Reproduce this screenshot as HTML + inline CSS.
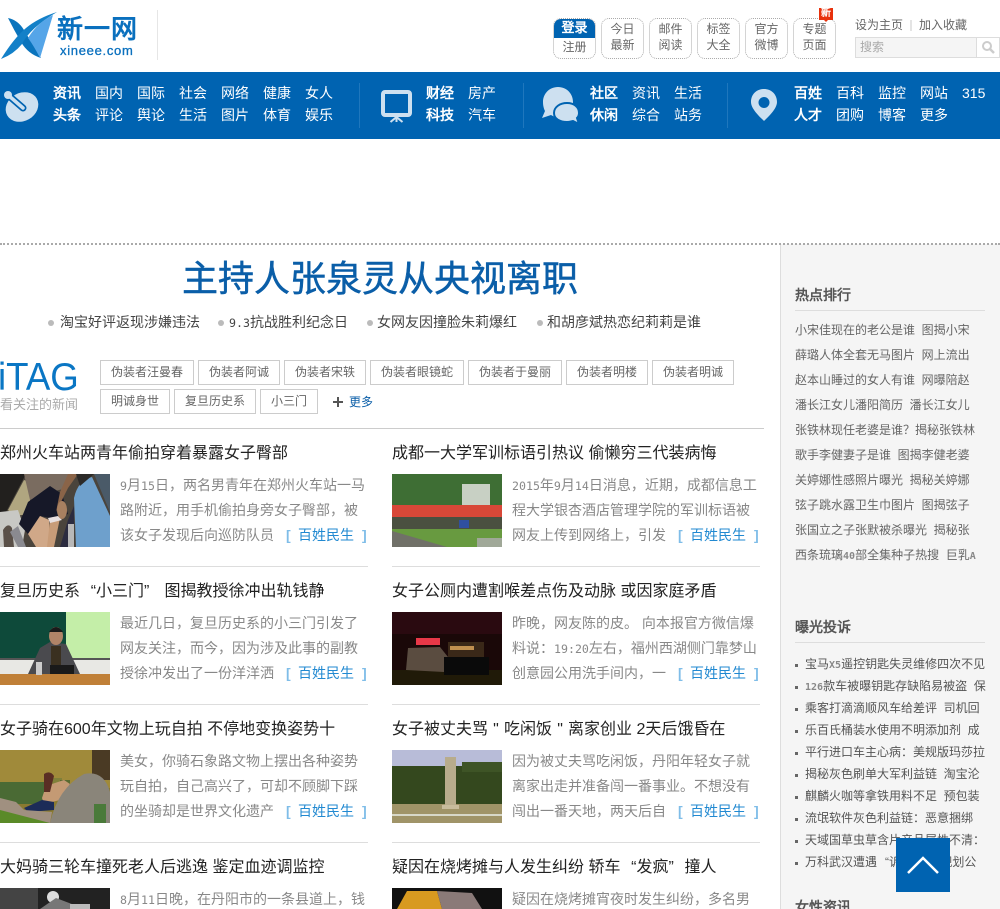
<!DOCTYPE html>
<html lang="zh">
<head>
<meta charset="utf-8">
<title>新一网</title>
<style>
html,body{margin:0;padding:0;background:#fff}
#p{position:relative;width:1000px;height:909px;overflow:hidden;font-family:"WenQuanYi Zen Hei","Liberation Sans",sans-serif;font-size:14px;color:#666}
#p div,#p span,#p svg{position:absolute;white-space:nowrap}
#p svg{display:block}
em{font-style:normal;display:inline-block;width:16px}
em.o{text-align:right}
em.c{text-align:left}
em.m2{text-align:center}
em.s12{width:12px}
u{text-decoration:none;font-family:"DejaVu Sans Mono",monospace;font-size:11.6px}
u.w{font-size:10px;font-weight:bold;color:#888}
.nav{left:0;top:72px;width:1000px;height:67px;background:#0063b1}
.n{color:#fff;font-size:14px;line-height:22px;height:22px}
.b{font-weight:bold}
.vd{top:83px;width:1px;height:45px;background:#1f77bd}
.btn{top:18px;width:41px;border:1px dotted #aaa;border-radius:8px;text-align:center;font-size:12px;line-height:16px;color:#666;padding-top:2px;height:37px}
.tag{height:23px;border:1px solid #ccc;line-height:23px;text-align:center;font-size:12px;color:#666}
.t{font-size:16px;color:#222;line-height:24px;height:24px}
.x{font-size:14px;color:#888;line-height:25px;height:25px}
.m{font-size:14px;color:#2189d1;line-height:25px;height:25px}
.m i{font-style:normal;font-weight:bold;color:#7fbde8}
.sep{height:1px;background:#ddd;width:368px}
.h{font-size:14px;font-weight:bold;color:#555;left:795px}
.s{left:795px;width:190px;overflow:hidden;font-size:12px;color:#666;line-height:25px;height:25px}
.l{left:805px;width:182px;overflow:hidden;font-size:12px;color:#555;line-height:22px;height:22px}
.d{left:795px;width:3px;height:3px;background:#666}
.hot{top:311px;font-size:14px;color:#444;line-height:22px}
.dot{top:320px;width:6px;height:6px;border-radius:50%;background:#bbb}
</style>
</head>
<body>
<div id="p">

<!-- logo -->
<svg style="left:0;top:10px" width="60" height="50" viewBox="0 0 60 50">
<path d="M8 8 Q18 10 24 20 Q30 30 41 48 Q28 44 21 32 Q14 20 8 8Z" fill="#0a74bd"/>
<path d="M1 49 Q14 44 22 34 Q30 18 57 2 Q38 8 26 18 Q14 28 1 49Z" fill="#1380c8"/>
<path d="M53 5 L40 48 Q34 36 28 28 Q38 12 53 5Z" fill="#55a5e8"/>
</svg>
<div style="left:57px;top:15px;font-size:26px;line-height:28px;font-weight:bold;color:#0a70be;letter-spacing:1px">新一网</div>
<div style="left:60px;top:43px;font-size:13px;line-height:16px;color:#0a70be;letter-spacing:.7px;font-family:'Liberation Sans',sans-serif;-webkit-text-stroke:.3px #0a70be">xineee.com</div>
<div style="left:157px;top:10px;width:1px;height:50px;background:#e6e6e6"></div>

<!-- top buttons -->
<div class="btn" style="left:553px;padding:0;height:39px;overflow:hidden">
  <div style="left:-1px;top:-1px;width:43px;height:20px;background:#0063b1;color:#fff;font-weight:bold;font-size:13px;line-height:19px;border-radius:8px 8px 0 0">登录</div>
  <div style="left:0;top:20px;width:41px;line-height:16px;text-align:center">注册</div>
</div>
<div class="btn" style="left:601px">今日<br>最新</div>
<div class="btn" style="left:649px">邮件<br>阅读</div>
<div class="btn" style="left:697px">标签<br>大全</div>
<div class="btn" style="left:745px">官方<br>微博</div>
<div class="btn" style="left:793px">专题<br>页面</div>
<div style="left:819px;top:8px;width:14px;height:12px;background:#e8310c;color:#fff;font-size:10px;line-height:12px;text-align:center;font-weight:bold">新</div>
<div style="left:824px;top:20px;width:0;height:0;border:2px solid transparent;border-top-color:#e8310c"></div>

<div style="left:855px;top:17px;font-size:12px;line-height:16px;color:#666">设为主页</div>
<div style="left:910px;top:20px;width:2px;height:11px;background:#e4e4e4"></div>
<div style="left:919px;top:17px;font-size:12px;line-height:16px;color:#666">加入收藏</div>
<div style="left:855px;top:37px;width:143px;height:19px;border:1px solid #ddd;background:#f5f5f5"></div>
<div style="left:860px;top:39px;font-size:12px;line-height:16px;color:#aaa">搜索</div>
<div style="left:976px;top:38px;width:1px;height:19px;background:#ddd"></div>
<div style="left:977px;top:38px;width:22px;height:19px;background:#fff"></div>
<svg style="left:981px;top:40px" width="15" height="15" viewBox="0 0 15 15"><circle cx="6" cy="6" r="4" fill="none" stroke="#ccc" stroke-width="2"/><path d="M9 9l4 4" stroke="#ccc" stroke-width="2.5"/></svg>

<!-- nav -->
<div class="nav"></div>
<svg style="left:4px;top:88px" width="36" height="36" viewBox="0 0 36 36">
<ellipse cx="18" cy="19" rx="17" ry="14" transform="rotate(-30 18 19)" fill="#cde0f0"/>
<path d="M4 7 L19 20" stroke="#0063b1" stroke-width="7" stroke-linecap="round"/>
<path d="M4 7 L19 20" stroke="#cde0f0" stroke-width="3.5" stroke-linecap="round"/>
<circle cx="4" cy="7" r="4" fill="#cde0f0"/>
</svg>
<div class="n b" style="left:53px;top:82px">资讯</div><div class="n b" style="left:53px;top:104px">头条</div>
<div class="n" style="left:95px;top:82px">国内</div><div class="n" style="left:95px;top:104px">评论</div>
<div class="n" style="left:137px;top:82px">国际</div><div class="n" style="left:137px;top:104px">舆论</div>
<div class="n" style="left:179px;top:82px">社会</div><div class="n" style="left:179px;top:104px">生活</div>
<div class="n" style="left:221px;top:82px">网络</div><div class="n" style="left:221px;top:104px">图片</div>
<div class="n" style="left:263px;top:82px">健康</div><div class="n" style="left:263px;top:104px">体育</div>
<div class="n" style="left:305px;top:82px">女人</div><div class="n" style="left:305px;top:104px">娱乐</div>
<div class="vd" style="left:359px"></div>
<svg style="left:380px;top:89px" width="34" height="34" viewBox="0 0 34 34">
<rect x="3" y="3" width="27" height="23" rx="2" fill="none" stroke="#cde0f0" stroke-width="4"/>
<path d="M16.500 27v6M16.500 28l-6 5M16.500 28l6 5" stroke="#cde0f0" stroke-width="2"/>
</svg>
<div class="n b" style="left:426px;top:82px">财经</div><div class="n b" style="left:426px;top:104px">科技</div>
<div class="n" style="left:468px;top:82px">房产</div><div class="n" style="left:468px;top:104px">汽车</div>
<div class="vd" style="left:523px"></div>
<svg style="left:541px;top:86px" width="40" height="38" viewBox="0 0 40 38">
<path d="M17 1 C8 1 2 8 2 16 C2 20 3 23 4 25 L1 32 L10 29 C13 31 15 31 18 31 C26 31 32 25 32 16 C32 8 26 1 17 1Z" fill="#cde0f0"/>
<path d="M26 17 C19 17 13 21 13 27 C13 33 19 36 26 36 C29 36 31 35 32 35 L38 38 L36 32 C37 31 38 29 38 27 C38 21 33 17 26 17Z" fill="#cde0f0" stroke="#0063b1" stroke-width="2"/>
</svg>
<div class="n b" style="left:590px;top:82px">社区</div><div class="n b" style="left:590px;top:104px">休闲</div>
<div class="n" style="left:632px;top:82px">资讯</div><div class="n" style="left:632px;top:104px">综合</div>
<div class="n" style="left:674px;top:82px">生活</div><div class="n" style="left:674px;top:104px">站务</div>
<div class="vd" style="left:727px"></div>
<svg style="left:751px;top:89px" width="26" height="33" viewBox="0 0 26 33">
<path fill-rule="evenodd" d="M13 0 C6 0 0 5 0 13 C0 20 9 28 13 32 C17 28 26 20 26 13 C26 5 20 0 13 0Z M13 8 A5.500 5.500 0 1 1 13 19 A5.500 5.500 0 1 1 13 8Z" fill="#cde0f0"/>
</svg>
<div class="n b" style="left:794px;top:82px">百姓</div><div class="n b" style="left:794px;top:104px">人才</div>
<div class="n" style="left:836px;top:82px">百科</div><div class="n" style="left:836px;top:104px">团购</div>
<div class="n" style="left:878px;top:82px">监控</div><div class="n" style="left:878px;top:104px">博客</div>
<div class="n" style="left:920px;top:82px">网站</div><div class="n" style="left:920px;top:104px">更多</div>
<div class="n" style="left:962px;top:82px">315</div>

<!-- dotted rule + sidebar -->
<div style="left:780px;top:244px;width:219px;height:665px;background:#f5f5f5;border-left:1px solid #ddd"></div>
<div style="left:0;top:243px;width:1000px;height:0;border-top:2px dotted #aaa"></div>

<!-- headline -->
<div style="left:0;top:256px;width:760px;text-align:center;font-size:36px;line-height:46px;color:#0a5ea8;-webkit-text-stroke:.5px #0a5ea8">主持人张泉灵从央视离职</div>
<div class="dot" style="left:48px"></div><div class="hot" style="left:60px">淘宝好评返现涉嫌违法</div>
<div class="dot" style="left:218px"></div><div class="hot" style="left:229px"><u>9.3</u>抗战胜利纪念日</div>
<div class="dot" style="left:367px"></div><div class="hot" style="left:377px">女网友因撞脸朱莉爆红</div>
<div class="dot" style="left:537px"></div><div class="hot" style="left:547px">和胡彦斌热恋纪莉莉是谁</div>

<!-- iTAG -->
<div style="left:-2px;top:356px;font-size:39px;line-height:44px;color:#0a76c4;font-family:'Liberation Sans',sans-serif;transform:scaleX(.94);transform-origin:left top">iTAG</div>
<div style="left:0;top:397px;font-size:13px;line-height:16px;color:#aaa">看关注的新闻</div>
<div class="tag" style="left:100px;top:360px;width:92px">伪装者汪曼春</div>
<div class="tag" style="left:198px;top:360px;width:80px">伪装者阿诚</div>
<div class="tag" style="left:284px;top:360px;width:80px">伪装者宋轶</div>
<div class="tag" style="left:370px;top:360px;width:92px">伪装者眼镜蛇</div>
<div class="tag" style="left:468px;top:360px;width:92px">伪装者于曼丽</div>
<div class="tag" style="left:566px;top:360px;width:80px">伪装者明楼</div>
<div class="tag" style="left:652px;top:360px;width:80px">伪装者明诚</div>
<div class="tag" style="left:100px;top:389px;width:68px">明诚身世</div>
<div class="tag" style="left:174px;top:389px;width:80px">复旦历史系</div>
<div class="tag" style="left:260px;top:389px;width:56px">小三门</div>
<div style="left:333px;top:401px;width:10px;height:2px;background:#555"></div>
<div style="left:337px;top:397px;width:2px;height:10px;background:#555"></div>
<div style="left:349px;top:394px;font-size:12px;line-height:16px;color:#0a5ea8">更多</div>
<div style="left:0;top:428px;width:764px;height:1px;background:#ccc"></div>

<!-- left column -->
<div class="t" style="left:0;top:442px">郑州火车站两青年偷拍穿着暴露女子臀部</div>
<svg style="left:0;top:474px" width="110" height="73" viewBox="0 0 110 73">
<rect width="110" height="73" fill="#4a443c"/>
<path d="M0 0H26L6 38H0Z" fill="#22201e"/><path d="M8 36L24 6 30 8 30 40 14 42Z" fill="#b0a680"/>
<path d="M0 38L18 36 25 56 22 73H0Z" fill="#c8c8c4"/><path d="M3 56Q8 48 12 54L14 73H4Z" fill="#5a5048"/><path d="M10 58L18 52 26 73H18Z" fill="#8a8a90"/>
<path d="M24 0H68V14L50 18 30 26Z" fill="#7a6c60"/><path d="M19 50L28 28 50 12 62 20 68 40 55 45 40 42 28 60Z" fill="#161828"/>
<path d="M28 60L40 42 49 46 50 73H36Z" fill="#d0a888"/><path d="M50 46L60 44 54 73H47Z" fill="#c89c78"/><path d="M48 44L58 42 62 46 50 49Z" fill="#e8e0e0"/>
<path d="M56 38L68 14 78 0H68L60 18Z" fill="#8a6448"/><ellipse cx="62" cy="36" rx="5" ry="9" fill="#a88060"/>
<path d="M60 73L68 46 74 32V73Z" fill="#2c2c40"/><rect x="68" y="50" width="6" height="23" fill="#b8b8b8"/>
<path d="M74 24Q78 6 92 3 L110 42V73H76Z" fill="#6ea0cc"/><path d="M94 0H110V38Z" fill="#4a5a68"/><path d="M76 0H94L80 12Z" fill="#2c2a28"/>
</svg>
<div class="x" style="left:120px;top:473px"><u>9</u>月<u>15</u>日，两名男青年在郑州火车站一马</div>
<div class="x" style="left:120px;top:498px">路附近，用手机偷拍身旁女子臀部，被</div>
<div class="x" style="left:120px;top:523px">该女子发现后向巡防队员</div>
<div class="m" style="left:286px;top:523px"><i>[</i></div><div class="m" style="left:298px;top:523px">百姓民生</div><div class="m" style="left:362px;top:523px"><i>]</i></div>
<div class="sep" style="left:0;top:566px"></div>

<div class="t" style="left:0;top:580px">复旦历史系<em class="o">“</em>小三门<em class="c">”</em> 图揭教授徐冲出轨钱静</div>
<svg style="left:0;top:612px" width="110" height="73" viewBox="0 0 110 73">
<rect width="110" height="73" fill="#e8e8e4"/><rect width="66" height="46" fill="#0e4a3a"/><rect x="66" width="44" height="46" fill="#c4eea8"/>
<rect y="46" width="110" height="2" fill="#555"/>
<path d="M28 62L40 36 50 30 66 32 80 62Z" fill="#4a4a4e"/><ellipse cx="56" cy="24" rx="7" ry="9" fill="#b08468"/><path d="M49 20Q56 10 63 20Z" fill="#1a1a1a"/><rect x="51" y="34" width="10" height="24" fill="#3a3020"/>
<rect x="50" y="53" width="24" height="10" fill="#1a1a1a"/><rect y="62" width="110" height="11" fill="#c08038"/><rect x="36" y="50" width="6" height="13" fill="#ccc"/>
</svg>
<div class="x" style="left:120px;top:611px">最近几日，复旦历史系的小三门引发了</div>
<div class="x" style="left:120px;top:636px">网友关注，而今，因为涉及此事的副教</div>
<div class="x" style="left:120px;top:661px">授徐冲发出了一份洋洋洒</div>
<div class="m" style="left:286px;top:661px"><i>[</i></div><div class="m" style="left:298px;top:661px">百姓民生</div><div class="m" style="left:362px;top:661px"><i>]</i></div>
<div class="sep" style="left:0;top:704px"></div>

<div class="t" style="left:0;top:718px">女子骑在600年文物上玩自拍 不停地变换姿势十</div>
<svg style="left:0;top:750px" width="110" height="73" viewBox="0 0 110 73">
<rect width="110" height="73" fill="#8a7a30"/><rect width="110" height="38" fill="#a08a3a"/>
<rect x="92" width="18" height="30" fill="#4a3a24"/><rect y="32" x="0" width="44" height="22" fill="#4a6a34"/><rect x="44" y="28" width="18" height="14" fill="#80803a"/><rect x="60" y="30" width="10" height="14" fill="#5a6a30"/>
<path d="M42 48L46 36 64 30 70 34 60 50 44 54Z" fill="#c49a74"/><path d="M44 24Q50 20 54 26L50 42 44 42Z" fill="#5a2e24"/><path d="M24 58L42 50 54 52 54 60 28 62Z" fill="#1c2c58"/>
<path d="M50 73Q58 38 84 24 Q104 20 110 42V73Z" fill="#8a857a"/><rect x="94" y="54" width="12" height="19" fill="#4a7a3a"/>
<path d="M0 48L16 52 24 60 52 62 50 73H0Z" fill="#a09080"/><path d="M0 60L50 73H0Z" fill="#5a8a28"/>
</svg>
<div class="x" style="left:120px;top:749px">美女，你骑石象路文物上摆出各种姿势</div>
<div class="x" style="left:120px;top:774px">玩自拍，自己高兴了，可却不顾脚下踩</div>
<div class="x" style="left:120px;top:799px">的坐骑却是世界文化遗产</div>
<div class="m" style="left:286px;top:799px"><i>[</i></div><div class="m" style="left:298px;top:799px">百姓民生</div><div class="m" style="left:362px;top:799px"><i>]</i></div>
<div class="sep" style="left:0;top:842px"></div>

<div class="t" style="left:0;top:856px">大妈骑三轮车撞死老人后逃逸 鉴定血迹调监控</div>
<svg style="left:0;top:888px" width="110" height="21" viewBox="0 0 110 21">
<rect width="110" height="21" fill="#222"/><rect x="0" width="38" height="21" fill="#444"/><circle cx="53" cy="9" r="6" fill="#ddd"/><path d="M40 21L56 10 85 21Z" fill="#777"/><rect x="70" y="16" width="20" height="5" fill="#bbb"/>
</svg>
<div class="x" style="left:120px;top:887px"><u>8</u>月<u>11</u>日晚，在丹阳市的一条县道上，钱</div>

<!-- right column -->
<div class="t" style="left:392px;top:442px">成都一大学军训标语引热议 偷懒穷三代装病悔</div>
<svg style="left:392px;top:474px" width="110" height="73" viewBox="0 0 110 73">
<rect width="110" height="73" fill="#7aa060"/><rect width="110" height="32" fill="#3e6e34"/><rect x="70" y="10" width="28" height="22" fill="#c8d0c4"/>
<rect y="31" width="110" height="12" fill="#d84838"/><rect y="43" width="110" height="12" fill="#4a5040"/><rect x="67" y="46" width="10" height="8" fill="#3050a0"/>
<path d="M0 55H110V73H0Z" fill="#689a40"/><path d="M0 57L55 73H0Z" fill="#707068"/><rect x="85" y="64" width="25" height="9" fill="#a0a898"/>
</svg>
<div class="x" style="left:512px;top:473px"><u>2015</u>年<u>9</u>月<u>14</u>日消息，近期，成都信息工</div>
<div class="x" style="left:512px;top:498px">程大学银杏酒店管理学院的军训标语被</div>
<div class="x" style="left:512px;top:523px">网友上传到网络上，引发</div>
<div class="m" style="left:678px;top:523px"><i>[</i></div><div class="m" style="left:690px;top:523px">百姓民生</div><div class="m" style="left:754px;top:523px"><i>]</i></div>
<div class="sep" style="left:392px;top:566px"></div>

<div class="t" style="left:392px;top:580px">女子公厕内遭割喉差点伤及动脉 或因家庭矛盾</div>
<svg style="left:392px;top:612px" width="110" height="73" viewBox="0 0 110 73">
<rect width="110" height="73" fill="#1a0808"/><rect width="110" height="22" fill="#2a0a10"/><rect y="58" width="110" height="15" fill="#201a08"/>
<path d="M14 58L16 36 48 35 56 45 52 60Z" fill="#5a4c40"/><rect x="24" y="26" width="24" height="7" fill="#e83848"/><rect x="56" y="30" width="36" height="18" fill="#3a2818"/><rect x="58" y="34" width="24" height="4" fill="#c09050"/>
<rect x="52" y="45" width="45" height="18" fill="#0a0a0a"/>
</svg>
<div class="x" style="left:512px;top:611px">昨晚，网友陈的皮。 向本报官方微信爆</div>
<div class="x" style="left:512px;top:636px">料说：<u>19:20</u>左右，福州西湖侧门靠梦山</div>
<div class="x" style="left:512px;top:661px">创意园公用洗手间内，一</div>
<div class="m" style="left:678px;top:661px"><i>[</i></div><div class="m" style="left:690px;top:661px">百姓民生</div><div class="m" style="left:754px;top:661px"><i>]</i></div>
<div class="sep" style="left:392px;top:704px"></div>

<div class="t" style="left:392px;top:718px">女子被丈夫骂<em class="m2">"</em>吃闲饭<em class="m2">"</em>离家创业 2天后饿昏在</div>
<svg style="left:392px;top:750px" width="110" height="73" viewBox="0 0 110 73">
<rect width="110" height="73" fill="#b8bcd8"/><rect y="16" width="110" height="38" fill="#34481e"/><rect y="12" x="70" width="40" height="10" fill="#3e5426"/><rect y="54" width="110" height="19" fill="#a09468"/>
<rect y="64" width="110" height="2" fill="#d8d8c8"/><rect x="53" y="7" width="11" height="52" fill="#b8ac8c"/><rect x="50" y="55" width="17" height="4" fill="#c8bc9c"/>
</svg>
<div class="x" style="left:512px;top:749px">因为被丈夫骂吃闲饭，丹阳年轻女子就</div>
<div class="x" style="left:512px;top:774px">离家出走并准备闯一番事业。不想没有</div>
<div class="x" style="left:512px;top:799px">闯出一番天地，两天后自</div>
<div class="m" style="left:678px;top:799px"><i>[</i></div><div class="m" style="left:690px;top:799px">百姓民生</div><div class="m" style="left:754px;top:799px"><i>]</i></div>
<div class="sep" style="left:392px;top:842px"></div>

<div class="t" style="left:392px;top:856px">疑因在烧烤摊与人发生纠纷 轿车<em class="o">“</em>发疯<em class="c">”</em>撞人</div>
<svg style="left:392px;top:888px" width="110" height="21" viewBox="0 0 110 21">
<rect width="110" height="21" fill="#111"/><path d="M5 21L15 3 45 3 50 21Z" fill="#d89a20"/><path d="M45 3L80 5 90 21H50Z" fill="#8a7a78"/>
</svg>
<div class="x" style="left:512px;top:887px">疑因在烧烤摊宵夜时发生纠纷，多名男</div>

<!-- sidebar -->
<div class="h" style="top:285px;line-height:20px">热点排行</div>
<div style="left:795px;top:310px;width:190px;height:1px;background:#ddd"></div>
<div class="s" style="top:318px">小宋佳现在的老公是谁&nbsp;&nbsp;图揭小宋</div>
<div class="s" style="top:343px">薛璐人体全套无马图片&nbsp;&nbsp;网上流出</div>
<div class="s" style="top:368px">赵本山睡过的女人有谁&nbsp;&nbsp;网曝陪赵</div>
<div class="s" style="top:393px">潘长江女儿潘阳简历&nbsp;&nbsp;潘长江女儿</div>
<div class="s" style="top:418px">张铁林现任老婆是谁？揭秘张铁林</div>
<div class="s" style="top:443px">歌手李健妻子是谁&nbsp;&nbsp;图揭李健老婆</div>
<div class="s" style="top:468px">关婷娜性感照片曝光&nbsp;&nbsp;揭秘关婷娜</div>
<div class="s" style="top:493px">弦子跳水露卫生巾图片&nbsp;&nbsp;图揭弦子</div>
<div class="s" style="top:518px">张国立之子张默被杀曝光&nbsp;&nbsp;揭秘张</div>
<div class="s" style="top:543px">西条琉璃<u class="w">40</u>部全集种子热搜&nbsp;&nbsp;巨乳<u class="w">A</u></div>

<div class="h" style="top:617px;line-height:20px">曝光投诉</div>
<div style="left:795px;top:642px;width:190px;height:1px;background:#ddd"></div>
<div class="d" style="top:664px"></div><div class="l" style="top:653px">宝马<u class="w">X5</u>遥控钥匙失灵维修四次不见</div>
<div class="d" style="top:686px"></div><div class="l" style="top:675px"><u class="w">126</u>款车被曝钥匙存缺陷易被盗&nbsp;&nbsp;保</div>
<div class="d" style="top:708px"></div><div class="l" style="top:697px">乘客打滴滴顺风车给差评&nbsp;&nbsp;司机回</div>
<div class="d" style="top:730px"></div><div class="l" style="top:719px">乐百氏桶装水使用不明添加剂&nbsp;&nbsp;成</div>
<div class="d" style="top:752px"></div><div class="l" style="top:741px">平行进口车主心病：美规版玛莎拉</div>
<div class="d" style="top:774px"></div><div class="l" style="top:763px">揭秘灰色刷单大军利益链&nbsp;&nbsp;淘宝沦</div>
<div class="d" style="top:796px"></div><div class="l" style="top:785px">麒麟火咖等拿铁用料不足&nbsp;&nbsp;预包装</div>
<div class="d" style="top:818px"></div><div class="l" style="top:807px">流氓软件灰色利益链：恶意捆绑</div>
<div class="d" style="top:840px"></div><div class="l" style="top:829px">天域国草虫草含片产品属性不清：</div>
<div class="d" style="top:862px"></div><div class="l" style="top:851px">万科武汉遭遇<em class="o s12">“</em>诉讼门<em class="c s12">”</em>&nbsp;规划公</div>
<div class="h" style="top:897px;line-height:20px">女性资讯</div>

<!-- back to top -->
<div style="left:896px;top:838px;width:54px;height:54px;background:#0063b1"></div>
<svg style="left:896px;top:838px" width="54" height="54" viewBox="0 0 54 54"><path d="M12 35 L27 20 L42 35" fill="none" stroke="#fff" stroke-width="2.500"/></svg>

</div>
</body>
</html>
